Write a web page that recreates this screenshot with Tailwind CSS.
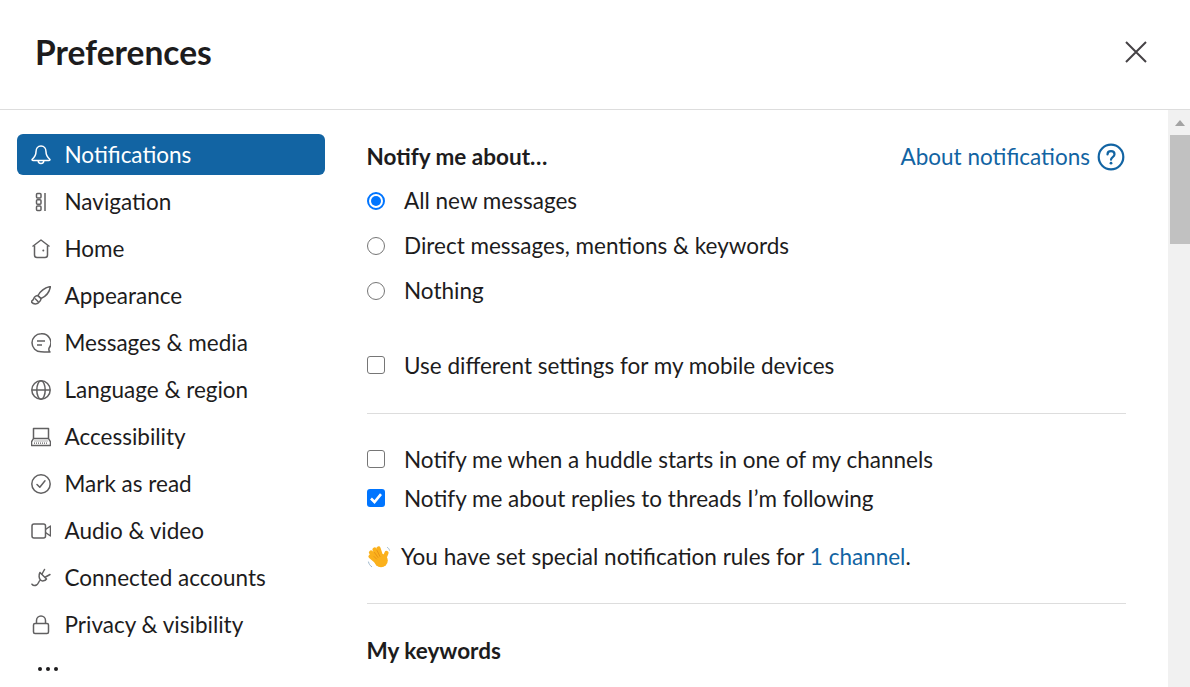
<!DOCTYPE html>
<html lang="en">
<head>
<meta charset="UTF-8">
<title>Preferences</title>
<script src="https://cdn.jsdelivr.net/npm/@tailwindcss/browser@4"></script>
</head>
<body class="h-[687px] w-[1190px] overflow-hidden bg-white font-['Lato',sans-serif] text-[22.5px] text-[#1d1c1d]">
  <header class="flex h-[110px] items-center justify-between border-b border-[#dddddd] pl-[35px] pr-[42px]">
    <h1 class="relative top-[-2px] text-[33.5px] font-bold leading-none">Preferences</h1>
    <button class="relative top-[-3px]">
      <svg class="h-[24px] w-[24px]" viewBox="0 0 24 24" fill="none" stroke="#454245" stroke-width="2"><path d="M2 2 22 22M22 2 2 22"/></svg>
    </button>
  </header>

  <div class="flex h-[577px]">
    <nav class="w-[342px] shrink-0 pl-[17px] pr-[17px] pt-[24px]">
      <ul class="flex flex-col gap-[6px]">
        <li class="flex h-[41px] items-center gap-[13.5px] rounded-[6px] bg-[#1264a3] pl-[14px] text-white">
          <svg class="h-[20px] w-[20px] shrink-0" viewBox="0 0 20 20" fill="none" stroke="currentColor" stroke-width="1.500" stroke-linejoin="round"><path d="M10 1C6.800 1 5 3.600 5 6.700c0 3.600-1.200 5.400-4 7.800 0 .6.300 1 1 1h16c.7 0 1-.4 1-1-2.800-2.400-4-4.200-4-7.800C15 3.600 13.200 1 10 1Z"/><path d="M7.200 15.500c0 1.800 1.100 3 2.800 3s2.800-1.200 2.800-3"/></svg>
          <span>Notifications</span>
        </li>
        <li class="flex h-[41px] items-center gap-[13.5px] pl-[14px]">
          <svg class="h-[20px] w-[20px] shrink-0" viewBox="0 0 20 20" fill="none" stroke="#616061" stroke-width="1.500"><rect x="5.500" y="1.500" width="4.500" height="4.500" rx="1"/><rect x="5.500" y="7.800" width="4.500" height="4.500" rx="1"/><rect x="5.500" y="14" width="4.500" height="4.500" rx="1"/><path d="M14 1v18"/></svg>
          <span>Navigation</span>
        </li>
        <li class="flex h-[41px] items-center gap-[13.5px] pl-[14px]">
          <svg class="h-[20px] w-[20px] shrink-0" viewBox="0 0 20 20" fill="none" stroke="#616061" stroke-width="1.500" stroke-linejoin="round"><path d="M1.500 7.500 10 1l8.500 6.500"/><path d="M3.500 6.500V16a2.500 2.500 0 0 0 2.500 2.500h8a2.500 2.500 0 0 0 2.500-2.500V6.500"/><circle cx="12.300" cy="11.600" r="1" fill="#616061" stroke="none"/></svg>
          <span>Home</span>
        </li>
        <li class="flex h-[41px] items-center gap-[13.5px] pl-[14px]">
          <svg class="h-[20px] w-[20px] shrink-0" viewBox="0 0 20 20" fill="none" stroke="#616061" stroke-width="1.500" stroke-linejoin="round"><path d="M7 9.500C9.500 5 14 1.500 19.500 .5c-1 5.500-4.500 10-9.500 12Z"/><path d="M6.500 9.500c-2.500.3-3.300 1.800-3.800 3.300-.3 1-1 1.800-2.700 2.700 2 3 6.500 3.600 9-.3.900-1.400 1.300-3.200 1-2.700Z"/><path d="M4 12.500l3.500 3.500"/></svg>
          <span>Appearance</span>
        </li>
        <li class="flex h-[41px] items-center gap-[13.5px] pl-[14px]">
          <svg class="h-[20px] w-[20px] shrink-0" viewBox="0 0 20 20" fill="none" stroke="#616061" stroke-width="1.500" stroke-linejoin="round"><path d="M10 .8a9 9 0 1 0 0 18c2.800 0 6 .5 9 .2-1-1-1.500-2-1-3.800A9 9 0 0 0 10 .8Z"/><path d="M6 8h8M6 12h5"/></svg>
          <span>Messages &amp; media</span>
        </li>
        <li class="flex h-[41px] items-center gap-[13.5px] pl-[14px]">
          <svg class="h-[20px] w-[20px] shrink-0" viewBox="0 0 20 20" fill="none" stroke="#616061" stroke-width="1.500"><circle cx="10" cy="10" r="9.200"/><ellipse cx="10" cy="10" rx="4.200" ry="9.200"/><path d="M1 10h18"/></svg>
          <span>Language &amp; region</span>
        </li>
        <li class="flex h-[41px] items-center gap-[13.5px] pl-[14px]">
          <svg class="h-[20px] w-[20px] shrink-0" viewBox="0 0 20 20" fill="none" stroke="#616061" stroke-width="1.500" stroke-linejoin="round"><path d="M2.500 11.500V1.500h15v10"/><path d="M2.500 11.500h15l2 3.500v3.500H.5V15Z"/><path d="M3.500 14h13M3 16.200h14" stroke-width="1.200" stroke-dasharray="1 1"/></svg>
          <span>Accessibility</span>
        </li>
        <li class="flex h-[41px] items-center gap-[13.5px] pl-[14px]">
          <svg class="h-[20px] w-[20px] shrink-0" viewBox="0 0 20 20" fill="none" stroke="#616061" stroke-width="1.500" stroke-linecap="round" stroke-linejoin="round"><circle cx="10" cy="10" r="9.200"/><path d="M6 10.500 8.800 13.300 14 6.800"/></svg>
          <span>Mark as read</span>
        </li>
        <li class="flex h-[41px] items-center gap-[13.5px] pl-[14px]">
          <svg class="h-[20px] w-[20px] shrink-0" viewBox="0 0 20 20" fill="none" stroke="#616061" stroke-width="1.500" stroke-linejoin="round"><rect x="1" y="3" width="13.500" height="14" rx="2"/><path d="M14.500 8.500 19.500 5v10l-5-3.500"/></svg>
          <span>Audio &amp; video</span>
        </li>
        <li class="flex h-[41px] items-center gap-[13.5px] pl-[14px]">
          <svg class="h-[20px] w-[20px] shrink-0" viewBox="0 0 20 20" fill="none" stroke="#616061" stroke-width="1.500" stroke-linecap="round" stroke-linejoin="round"><path d="M9 4.500 15.500 11c-1.500 2-4.500 2.500-6 1S7.500 7 9 4.500Z"/><path d="M13.500 1.500 11 6M19 6.500 14.500 9"/><path d="M9 12.500c-1.500 1-1.500 3.500-3.500 4.500s-3.500 .5-4.500-.8"/></svg>
          <span>Connected accounts</span>
        </li>
        <li class="flex h-[41px] items-center gap-[13.5px] pl-[14px]">
          <svg class="h-[20px] w-[20px] shrink-0" viewBox="0 0 20 20" fill="none" stroke="#616061" stroke-width="1.500"><rect x="2.500" y="8.500" width="15" height="10" rx="1.500"/><path d="M5.500 8.500V5.500a4.500 4.500 0 0 1 9 0v3"/></svg>
          <span>Privacy &amp; visibility</span>
        </li>
        <li class="flex h-[36px] items-center gap-[4px] pl-[21px]">
          <span class="h-[4px] w-[4px] rounded-full bg-[#1d1c1d]"></span>
          <span class="h-[4px] w-[4px] rounded-full bg-[#1d1c1d]"></span>
          <span class="h-[4px] w-[4px] rounded-full bg-[#1d1c1d]"></span>
        </li>
      </ul>
    </nav>

    <main class="w-[784px] shrink-0 pl-[25px] pt-[30px]">
      <div class="flex h-[34px] items-center justify-between">
        <h2 class="-ml-[0.5px] font-bold">Notify me about…</h2>
        <a class="flex items-center gap-[7px] pr-[1px] text-[#1264a3]">
          About notifications
          <svg class="h-[28px] w-[28px]" viewBox="0 0 28 28" fill="none" stroke="currentColor" stroke-width="2.200"><circle cx="14" cy="14" r="12.300"/><path d="M10.500 11.500c0-2 1.500-3.300 3.500-3.300s3.500 1.300 3.500 3.100c0 2.900-3.500 2.700-3.500 5.400" stroke-linecap="round"/><circle cx="14" cy="20.200" r="1.400" fill="currentColor" stroke="none"/></svg>
        </a>
      </div>

      <div class="mt-[10px] flex flex-col gap-[11px]">
        <label class="flex h-[34px] items-center gap-[19px]">
          <span class="flex h-[18px] w-[18px] items-center justify-center rounded-full border-2 border-[#0075ff]"><span class="h-[10px] w-[10px] rounded-full bg-[#0075ff]"></span></span>
          All new messages
        </label>
        <label class="flex h-[34px] items-center gap-[19px]">
          <span class="h-[18px] w-[18px] rounded-full border-[1.500px] border-[#767676]"></span>
          Direct messages, mentions &amp; keywords
        </label>
        <label class="flex h-[34px] items-center gap-[19px]">
          <span class="relative -top-[0.5px] h-[18px] w-[18px] rounded-full border-[1.500px] border-[#767676]"></span>
          Nothing
        </label>
      </div>

      <label class="mt-[41px] flex h-[34px] items-center gap-[19px]">
        <span class="relative -top-[1px] h-[18px] w-[18px] rounded-[3px] border-[1.500px] border-[#767676]"></span>
        Use different settings for my mobile devices
      </label>

      <hr class="mt-[30px] border-[#dddddd]">

      <div class="mt-[29px] flex flex-col gap-[5px]">
        <label class="flex h-[34px] items-center gap-[19px]">
          <span class="relative -top-[1px] h-[18px] w-[18px] rounded-[3px] border-[1.500px] border-[#767676]"></span>
          Notify me when a huddle starts in one of my channels
        </label>
        <label class="flex h-[34px] items-center gap-[19px]">
          <span class="relative -top-[1px] flex h-[18px] w-[18px] items-center justify-center rounded-[3px] bg-[#0075ff]">
            <svg class="h-[14px] w-[14px]" viewBox="0 0 14 14" fill="none" stroke="#fff" stroke-width="2.600"><path d="M2 7.500 5.500 11 12 3.200"/></svg>
          </span>
          Notify me about replies to threads I’m following
        </label>
      </div>

      <p class="mt-[24px] flex h-[34px] items-center">
        <svg class="mr-[10px] h-[24px] w-[24px] shrink-0" viewBox="0 0 24 24" fill="none" stroke-linecap="round">
          <path d="M1.500 17c.4 2 1.500 3.600 3.200 4.700M20.500 2.500c1 .6 1.700 1.500 2 2.700" stroke="#9fb8cc"/>
          <circle cx="14" cy="15.500" r="6.800" fill="#fbb11c"/>
          <g stroke="#fbb11c" stroke-width="4.200">
            <path d="M10 17 3.500 11.500M10 14 4 7.500M11.500 12 7.500 4.500M14 11 11.500 3.500M17 14l2.500-6"/>
          </g>
          <path d="M7 11.500 9.500 14M7.500 7.500l3.500 5M10 5.500l3 6" stroke="#e48c15" stroke-width=".8"/>
        </svg>
        <span>You have set special notification rules for <a class="text-[#1264a3]">1 channel</a>.</span>
      </p>

      <hr class="mt-[29px] border-[#dddddd]">

      <h2 class="-ml-[0.5px] mt-[30px] h-[34px] font-bold leading-[34px]">My keywords</h2>
    </main>

    <div class="ml-auto flex w-[22px] shrink-0 flex-col bg-[#f1f1f1]">
      <div class="ml-[2px] flex h-[25px] items-center justify-center">
        <span class="h-0 w-0 border-x-[5.500px] border-b-[6px] border-x-transparent border-b-[#a3a3a3]"></span>
      </div>
      <div class="ml-[2px] h-[109px] bg-[#c1c1c1]"></div>
    </div>
  </div>
</body>
</html>
